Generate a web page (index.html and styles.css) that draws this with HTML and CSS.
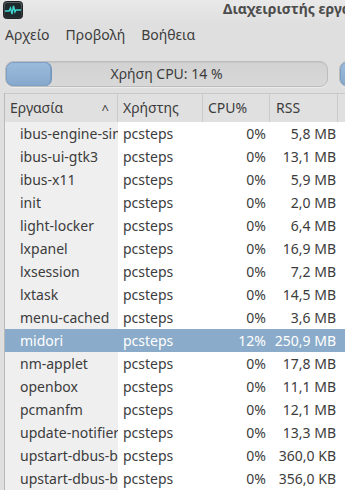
FILE: index.html
```html
<!DOCTYPE html>
<html lang="el">
<head>
<meta charset="utf-8">
<link rel="stylesheet" href="styles.css">
</head>
<body>
<div class="window">
  <div class="titlebar">
    <svg class="appicon" width="20" height="18" viewBox="0 0 20 18">
      <defs>
        <linearGradient id="ig" x1="0" y1="0" x2="0" y2="1">
          <stop offset="0" stop-color="#5a6064"/>
          <stop offset="1" stop-color="#2a2e31"/>
        </linearGradient>
      </defs>
      <rect x="0.5" y="0.5" width="19" height="17" rx="3" fill="url(#ig)" stroke="#1e2224"/>
      <rect x="2" y="2" width="16" height="14" rx="1.5" fill="#1f2a2e"/>
      <polyline points="2,10 6,10 7.5,7 9,13 10.5,5 12,11 13,9 18,9" fill="none" stroke="#3fd6d0" stroke-width="1.4"/>
    </svg>
    <div class="title">Διαχειριστής εργασιών</div>
  </div>
  <div class="menubar">
    <span class="menuitem">Αρχείο</span>
    <span class="menuitem">Προβολή</span>
    <span class="menuitem">Βοήθεια</span>
  </div>
  <div class="meters">
    <div class="meter">
      <div class="fill" style="width:14%"></div>
      <span class="label">Χρήση CPU: 14 %</span>
    </div>
    <div class="meter meter2">
      <div class="fill" style="width:40%"></div>
    </div>
  </div>
  <div class="list">
    <div class="row head">
      <div class="c name">Εργασία<span class="sort">^</span></div>
      <div class="c user">Χρήστης</div>
      <div class="c cpu">CPU%</div>
      <div class="c rss">RSS</div>
      <div class="c rest"></div>
    </div>
    <div class="row"><div class="c name">ibus-engine-simple</div><div class="c user">pcsteps</div><div class="c cpu">0%</div><div class="c rss">5,8 MB</div><div class="c rest"></div></div>
    <div class="row"><div class="c name">ibus-ui-gtk3</div><div class="c user">pcsteps</div><div class="c cpu">0%</div><div class="c rss">13,1 MB</div><div class="c rest"></div></div>
    <div class="row"><div class="c name">ibus-x11</div><div class="c user">pcsteps</div><div class="c cpu">0%</div><div class="c rss">5,9 MB</div><div class="c rest"></div></div>
    <div class="row"><div class="c name">init</div><div class="c user">pcsteps</div><div class="c cpu">0%</div><div class="c rss">2,0 MB</div><div class="c rest"></div></div>
    <div class="row"><div class="c name">light-locker</div><div class="c user">pcsteps</div><div class="c cpu">0%</div><div class="c rss">6,4 MB</div><div class="c rest"></div></div>
    <div class="row"><div class="c name">lxpanel</div><div class="c user">pcsteps</div><div class="c cpu">0%</div><div class="c rss">16,9 MB</div><div class="c rest"></div></div>
    <div class="row"><div class="c name">lxsession</div><div class="c user">pcsteps</div><div class="c cpu">0%</div><div class="c rss">7,2 MB</div><div class="c rest"></div></div>
    <div class="row"><div class="c name">lxtask</div><div class="c user">pcsteps</div><div class="c cpu">0%</div><div class="c rss">14,5 MB</div><div class="c rest"></div></div>
    <div class="row"><div class="c name">menu-cached</div><div class="c user">pcsteps</div><div class="c cpu">0%</div><div class="c rss">3,6 MB</div><div class="c rest"></div></div>
    <div class="row selected"><div class="c name">midori</div><div class="c user">pcsteps</div><div class="c cpu">12%</div><div class="c rss">250,9 MB</div><div class="c rest"></div></div>
    <div class="row"><div class="c name">nm-applet</div><div class="c user">pcsteps</div><div class="c cpu">0%</div><div class="c rss">17,8 MB</div><div class="c rest"></div></div>
    <div class="row"><div class="c name">openbox</div><div class="c user">pcsteps</div><div class="c cpu">0%</div><div class="c rss">11,1 MB</div><div class="c rest"></div></div>
    <div class="row"><div class="c name">pcmanfm</div><div class="c user">pcsteps</div><div class="c cpu">0%</div><div class="c rss">12,1 MB</div><div class="c rest"></div></div>
    <div class="row"><div class="c name">update-notifier</div><div class="c user">pcsteps</div><div class="c cpu">0%</div><div class="c rss">13,3 MB</div><div class="c rest"></div></div>
    <div class="row"><div class="c name">upstart-dbus-bridge</div><div class="c user">pcsteps</div><div class="c cpu">0%</div><div class="c rss">360,0 KB</div><div class="c rest"></div></div>
    <div class="row"><div class="c name">upstart-dbus-bridge</div><div class="c user">pcsteps</div><div class="c cpu">0%</div><div class="c rss">356,0 KB</div><div class="c rest"></div></div>
  </div>
</div>
</body>
</html>
```

FILE: styles.css
```css
html, body {
  margin: 0;
  padding: 0;
  width: 345px;
  height: 490px;
  overflow: hidden;
  background: #dfdfdf;
}
.window {
  font-family: "Noto Sans", "DejaVu Sans", sans-serif;
  font-size: 14px;
  color: #3c3c3c;
  width: 345px;
  height: 490px;
  overflow: hidden;
  display: flex;
  flex-direction: column;
}
.titlebar {
  height: 22px;
  display: flex;
  align-items: flex-start;
  background: linear-gradient(#e9e9e9, #e0e0e0);
  white-space: nowrap;
  overflow: hidden;
}
.appicon {
  margin: 1px 0 0 3px;
  flex: none;
}
.title {
  margin-left: 200px;
  font-weight: bold;
  font-size: 14px;
  line-height: 18px;
  color: #4c4c4c;
  flex: none;
}
.menubar {
  height: 26px;
  display: flex;
  align-items: center;
  padding-left: 5px;
  gap: 16px;
  line-height: 20px;
  color: #3c3c3c;
  background: #dfdfdf;
}
.meters {
  display: flex;
  gap: 11px;
  padding: 14px 0 0 5px;
  height: 32px;
}
.meter {
  position: relative;
  flex: none;
  width: 321px;
  height: 24px;
  border: 1px solid #bdbdbd;
  border-radius: 8px;
  background: linear-gradient(#d2d2d2, #d8d8d8);
  box-shadow: inset 0 1px 1px rgba(0,0,0,0.06), 0 1px 0 #ececec;
  overflow: hidden;
}
.meter .fill {
  position: absolute;
  left: 0;
  top: 0;
  bottom: 0;
  background: linear-gradient(#9dbcdc, #86a8cc);
  border-right: 1px solid #7195bb;
  border-radius: 7px;
  box-shadow: inset 0 0 0 1px #7c9fc4;
}
.meter .label {
  position: relative;
  display: block;
  text-align: center;
  line-height: 24px;
  color: #3c3c3c;
}
.meter2 {
  width: 60px;
}
.meter2 .fill {
  width: 60px !important;
}
.list {
  margin-left: 4px;
  border-left: 1px solid #b9b9b9;
  display: flex;
  flex-direction: column;
}
.row {
  display: grid;
  grid-template-columns: 113px 85px 67px 68px 1fr;
  height: 23px;
  line-height: 23px;
  background: #ffffff;
}
.c {
  white-space: nowrap;
  overflow: hidden;
}
.row .name {
  background: #efefef;
  padding-left: 15px;
}
.row .user {
  padding-left: 5px;
}
.row .cpu {
  text-align: right;
  padding-right: 4px;
}
.row .rss {
  text-align: right;
  padding-right: 2px;
}
.row.head {
  height: 29px;
  line-height: 28px;
  background: #e0e0e0;
  border-top: 1px solid #c9c9c9;
  box-sizing: border-box;
}
.row.head .c {
  background: #e0e0e0;
  text-align: left;
  padding: 0 0 0 5px;
  border-right: 1px solid #cacaca;
  position: relative;
}
.row.head .user { padding-left: 5px; }
.row.head .rss { padding-left: 6px; }
.row.head .rest { border-right: none; }
.sort {
  position: absolute;
  right: 8px;
  top: 1px;
  font-size: 13px;
  color: #3c3c3c;
}
.row.selected,
.row.selected .name {
  background: #8aabc9;
  color: #ffffff;
}
```
